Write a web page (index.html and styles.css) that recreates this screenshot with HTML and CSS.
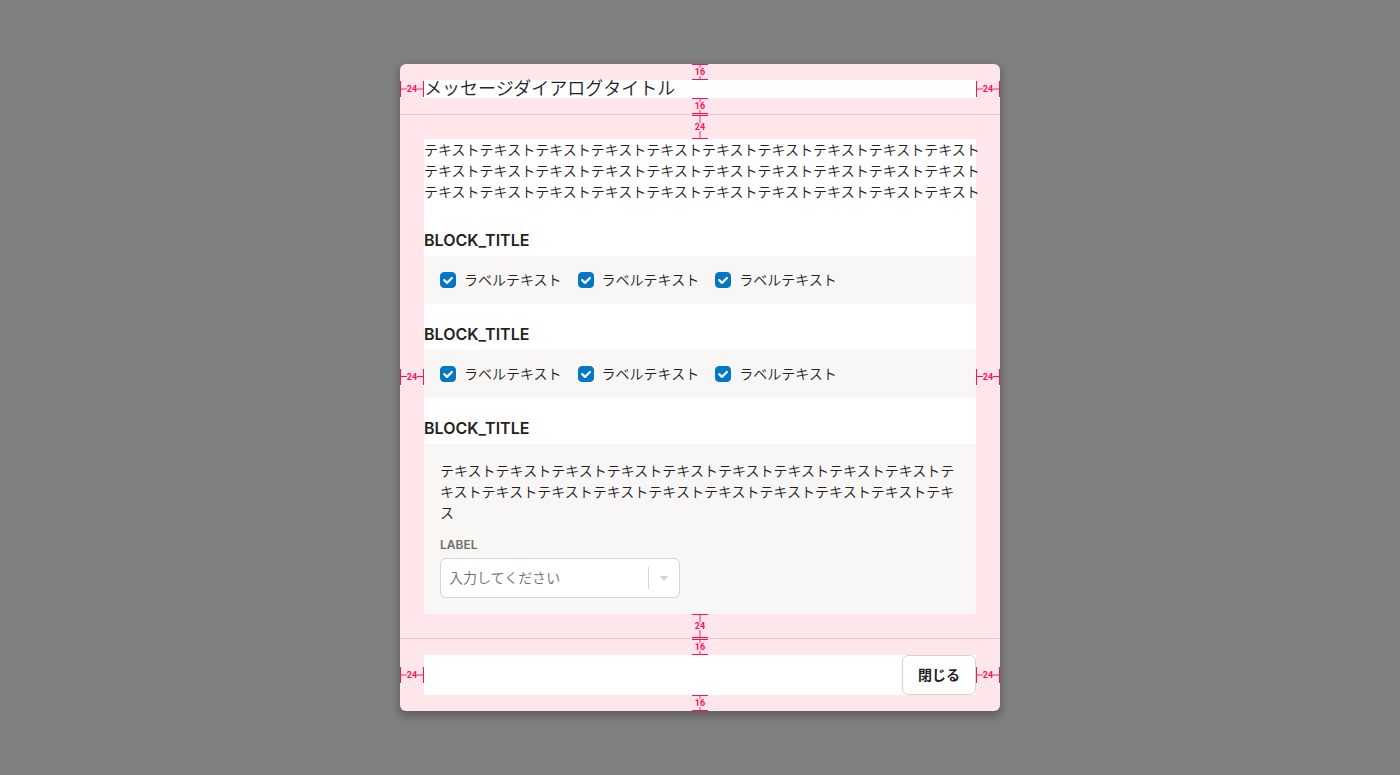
FILE: index.html
```html
<!DOCTYPE html>
<html lang="ja">
<head>
<meta charset="utf-8">
<meta name="viewport" content="width=device-width, initial-scale=1">
<title>メッセージダイアログ</title>
<link rel="stylesheet" href="styles.css">
</head>
<body class="scrim">
<div class="dialog" role="dialog" aria-modal="true" aria-labelledby="dialog-title">
  <header class="section section-header">
    <div class="content">
      <h1 class="title" id="dialog-title">メッセージダイアログタイトル</h1>
    </div>
    <span class="measure top small" aria-hidden="true">16</span>
    <span class="measure bottom small" aria-hidden="true">16</span>
    <span class="measure left" aria-hidden="true">24</span>
    <span class="measure right" aria-hidden="true">24</span>
  </header>

  <main class="section section-body">
    <div class="content">
      <p class="text">テキストテキストテキストテキストテキストテキストテキストテキストテキストテキスト<br>テキストテキストテキストテキストテキストテキストテキストテキストテキストテキスト<br>テキストテキストテキストテキストテキストテキストテキストテキストテキストテキスト</p>

      <section class="block">
        <h2 class="block-title">BLOCK_TITLE</h2>
        <div class="panel checks">
          <label class="check"><span class="box"><input type="checkbox" checked><svg class="tick" viewBox="0 0 16 16"><path d="M4.200 8.100 7 10.900 11.900 6"/></svg></span>ラベルテキスト</label>
          <label class="check"><span class="box"><input type="checkbox" checked><svg class="tick" viewBox="0 0 16 16"><path d="M4.200 8.100 7 10.900 11.900 6"/></svg></span>ラベルテキスト</label>
          <label class="check"><span class="box"><input type="checkbox" checked><svg class="tick" viewBox="0 0 16 16"><path d="M4.200 8.100 7 10.900 11.900 6"/></svg></span>ラベルテキスト</label>
        </div>
      </section>

      <section class="block">
        <h2 class="block-title">BLOCK_TITLE</h2>
        <div class="panel checks">
          <label class="check"><span class="box"><input type="checkbox" checked><svg class="tick" viewBox="0 0 16 16"><path d="M4.200 8.100 7 10.900 11.900 6"/></svg></span>ラベルテキスト</label>
          <label class="check"><span class="box"><input type="checkbox" checked><svg class="tick" viewBox="0 0 16 16"><path d="M4.200 8.100 7 10.900 11.900 6"/></svg></span>ラベルテキスト</label>
          <label class="check"><span class="box"><input type="checkbox" checked><svg class="tick" viewBox="0 0 16 16"><path d="M4.200 8.100 7 10.900 11.900 6"/></svg></span>ラベルテキスト</label>
        </div>
      </section>

      <section class="block">
        <h2 class="block-title">BLOCK_TITLE</h2>
        <div class="panel">
          <p class="text">テキストテキストテキストテキストテキストテキストテキストテキストテキストテ<br>キストテキストテキストテキストテキストテキストテキストテキストテキストテキ<br>ス</p>
          <label class="field-label" for="choice">LABEL</label>
          <div class="select-wrap">
            <select class="select" id="choice">
              <option>入力してください</option>
            </select>
            <svg class="caret" viewBox="0 0 8 5" aria-hidden="true"><path d="M.7 0h6.600q.7 0 .3.600L4.500 4.600q-.5.500-1 0L.4.600Q0 0 .7 0z"/></svg>
          </div>
        </div>
      </section>
    </div>
    <span class="measure top" aria-hidden="true">24</span>
    <span class="measure bottom" aria-hidden="true">24</span>
    <span class="measure left thin" aria-hidden="true">24</span>
    <span class="measure right thin" aria-hidden="true">24</span>
  </main>

  <footer class="section section-footer">
    <div class="content actions">
      <button class="button" type="button">閉じる</button>
    </div>
    <span class="measure top small" aria-hidden="true">16</span>
    <span class="measure bottom small" aria-hidden="true">16</span>
    <span class="measure left" aria-hidden="true">24</span>
    <span class="measure right" aria-hidden="true">24</span>
  </footer>
</div>
</body>
</html>
```
FILE: styles.css
```css
*, *::before, *::after { box-sizing: border-box; }

.scrim {
  margin: 0;
  min-height: 100vh;
  display: grid;
  place-items: center;
  background: #808080;
  color: #23221e;
  font-family: Inter, "Noto Sans CJK JP", sans-serif;
  font-size: 14px;
}

.dialog {
  width: 100%;
  max-width: 600px;
  border-radius: 6px;
  background: #fee6eb;
  box-shadow: 0 4px 8px 2px rgba(0, 0, 0, 0.24);
}

.section { position: relative; padding: 16px 24px; }
.section-header { border-bottom: 1px solid #dacdce; }
.section-body { padding: 24px; }
.section-footer { border-top: 1px solid #d6d3d0; }
.content { background: #fff; }

.title { margin: 0; font-size: 18px; line-height: 18px; font-weight: 350; }
.text { margin: 0; font-family: "Noto Sans CJK JP", sans-serif; line-height: 21px; font-weight: 350; white-space: nowrap; }

.block { padding-top: 22px; }
.text + .block { padding-top: 30px; }
.block-title { margin: 0 0 8px; font-size: 16px; line-height: 16px; font-weight: 600; }
.panel { padding: 16px; background: #f8f7f6; }

.checks { display: flex; flex-wrap: wrap; gap: 16px; }
.check { display: flex; align-items: center; gap: 8px; line-height: 16px; font-weight: 350; }
.box { position: relative; display: flex; }
.box input { appearance: none; width: 16px; height: 16px; margin: 0; border-radius: 4px; border: 1px solid #d6d3d0; background: #fff; }
.box input:checked { background: #0077c7; border-color: #0077c7; }
.tick { position: absolute; inset: 0; pointer-events: none; fill: none; stroke: #fff; stroke-width: 2.2; stroke-linecap: round; stroke-linejoin: round; }

.field-label { display: block; margin: 15px 0 6px; font-size: 12px; line-height: 14px; font-weight: 600; color: #706d65; }
.select-wrap { position: relative; width: 240px; max-width: 100%; }
.select-wrap::after { content: ""; position: absolute; top: 9px; bottom: 9px; right: 31px; width: 1px; background: #d6d3d0; }
.select { appearance: none; display: block; width: 100%; height: 40px; padding: 0 40px 2px 8px; border: 1px solid #d6d3d0; border-radius: 6px; background: #fff; color: #706d65; font: 350 14px "Noto Sans CJK JP", sans-serif; }
.caret { position: absolute; top: 18px; right: 12px; width: 8px; height: 5px; fill: #d6d3d0; pointer-events: none; }

.actions { display: flex; justify-content: flex-end; }
.button { height: 40px; padding: 0 15px 2px; border: 1px solid #d6d3d0; border-radius: 6px; background: #fff; color: #23221e; font: 700 14px "Noto Sans CJK JP", sans-serif; }

/* Spacing annotations: two end caps, a stem on each side of the number. */
.measure {
  position: absolute;
  display: flex;
  align-items: center;
  color: #ff0f5a;
  font: 700 9px/8px Roboto, sans-serif;
}
.measure::before, .measure::after { content: ""; flex: 1; }
.measure.top, .measure.bottom {
  left: 50%;
  width: 16px;
  height: 24px;
  margin-left: -8px;
  flex-direction: column;
  border-top: 1px solid;
  border-bottom: 1px solid;
}
.measure.top { top: 0; }
.measure.bottom { bottom: 0; }
.measure.small { height: 16px; }
.measure.top::before, .measure.top::after,
.measure.bottom::before, .measure.bottom::after { width: 2px; background: #ff87ad; }
.measure.left, .measure.right {
  top: 50%;
  width: 24px;
  height: 16px;
  margin-top: -8px;
  border-left: 1px solid;
  border-right: 1px solid;
}
.measure.left { left: 0; }
.measure.right { right: 0; }
.measure.left::before, .measure.left::after,
.measure.right::before, .measure.right::after { height: 2px; background: #ff87ad; }
.measure.thin::before, .measure.thin::after { height: 1px; background: #ff0f5a; }
```
